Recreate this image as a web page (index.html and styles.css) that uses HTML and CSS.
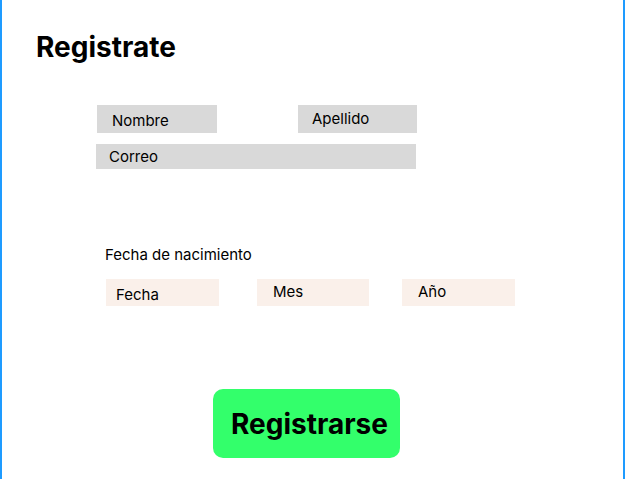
FILE: index.html
```html
<!DOCTYPE html>
<html lang="es">
<head>
<meta charset="utf-8">
<title>Registrate</title>
<link rel="stylesheet" href="styles.css">
</head>
<body>
<main class="frame">
  <h1 class="title">Registrate</h1>
  <section class="names">
    <div class="field field-nombre">Nombre</div>
    <div class="field field-apellido">Apellido</div>
  </section>
  <div class="field field-correo">Correo</div>
  <p class="label">Fecha de nacimiento</p>
  <section class="dates">
    <div class="date date-fecha">Fecha</div>
    <div class="date date-mes">Mes</div>
    <div class="date date-anio">Año</div>
  </section>
  <button class="submit" type="button">Registrarse</button>
</main>
</body>
</html>
```

FILE: styles.css
```css
* { box-sizing: border-box; }
html, body { margin: 0; padding: 0; background: #ffffff; }
body { font-family: Inter, "Noto Sans", "Liberation Sans", sans-serif; color: #000; }

.frame {
  width: 625px;
  height: 479px;
  border-left: 2px solid #1e9bff;
  border-right: 2px solid #1e9bff;
  overflow: hidden;
}

.title {
  margin: 30px 0 0 34px;
  font-size: 28px;
  line-height: 34px;
  font-weight: 700;
}

.names {
  display: flex;
  gap: 81px;
  margin: 41px 0 0 95px;
}

.field {
  background: #d9d9d9;
  font-size: 15px;
  line-height: 18px;
}
.field-nombre { width: 120px; height: 28px; padding: 7px 0 0 15px; }
.field-apellido { width: 119px; height: 28px; padding: 5px 0 0 14px; }
.field-correo { width: 320px; height: 25px; margin: 11px 0 0 94px; padding: 4px 0 0 13px; }

.label {
  margin: 77px 0 0 103px;
  font-size: 15px;
  line-height: 18px;
}

.dates {
  display: flex;
  margin: 15px 0 0 104px;
}
.date {
  background: #faf0ea;
  width: 113px;
  height: 27px;
  font-size: 15px;
  line-height: 18px;
}
.date-fecha { padding: 7px 0 0 10px; }
.date-mes { width: 112px; margin-left: 38px; padding: 4px 0 0 16px; }
.date-anio { margin-left: 33px; padding: 4px 0 0 16px; }

.submit {
  display: block;
  width: 187px;
  height: 69px;
  margin: 83px 0 0 211px;
  padding: 0 0 0 6px;
  border: none;
  border-radius: 10px;
  background: #33ff6b;
  font-family: Inter, "Noto Sans", "Liberation Sans", sans-serif;
  font-size: 28px;
  font-weight: 700;
  color: #000;
  text-align: center;
}
```
